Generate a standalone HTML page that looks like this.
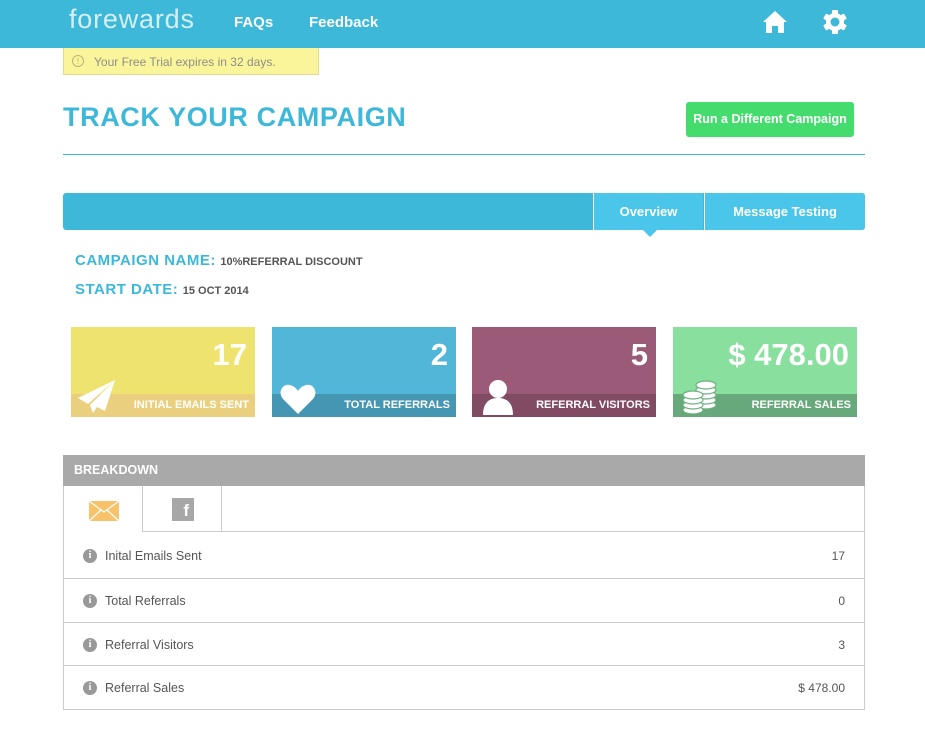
<!DOCTYPE html>
<html><head><meta charset="utf-8"><style>
*{box-sizing:border-box;margin:0;padding:0}
body{width:925px;height:736px;background:#fff;font-family:"Liberation Sans",sans-serif;position:relative;overflow:hidden}
.abs{position:absolute}
.hdr{left:0;top:0;width:925px;height:48px;background:#3db8d9}
.logo{left:69px;top:4px;color:#d4eff7;font-size:27px;letter-spacing:0.8px;font-weight:normal}
.nav{top:14px;color:#fff;font-weight:bold;font-size:15px}
.trial{left:63px;top:48px;width:256px;height:27px;background:#faf59a;border:1px solid #e2d98c;border-top:none;color:#8f8f86;font-size:12px;padding:7px 0 0 30px}
.trial .i{position:absolute;left:8px;top:7px;width:12px;height:12px;border:1px solid #b9b37a;border-radius:50%;font-size:8px;text-align:center;line-height:11px;color:#b0aa70;padding:0}
h1{position:absolute;left:63px;top:102px;color:#3db8d9;font-size:27px;font-weight:bold;letter-spacing:0.6px}
.btn{left:686px;top:102px;width:168px;height:35px;background:#45dc6e;border-radius:3px;color:#fff;font-size:12.5px;font-weight:bold;text-align:center;line-height:35px}
.rule{left:63px;top:154px;width:802px;height:1px;background:#3db8d9}
.tabbar{left:63px;top:193px;width:802px;height:37px;background:#3db8d9;border-radius:3px}
.tab{top:193px;height:37px;background:#49c6ea;color:#fff;font-size:13px;font-weight:bold;text-align:center;line-height:37px}
.lbl{color:#3db8d9;font-weight:bold;font-size:15px;letter-spacing:0.5px}
.val{color:#555;font-weight:bold;font-size:11px}
.card{top:327px;width:184px;height:90px;overflow:hidden}
.card .n{position:absolute;right:8px;top:10px;color:#fff;font-weight:bold;font-size:31px}
.card .b{position:absolute;left:0;bottom:0;width:100%;height:23px;text-align:right;padding-right:6px;color:#fff;font-weight:bold;font-size:11px;line-height:23px}
.card svg{position:absolute}
.bd{left:63px;top:455px;width:802px;height:255px;border:1px solid #c8ccd0}
.bdh{position:absolute;left:-1px;top:-1px;width:802px;height:31px;background:#a9a9a9;color:#fff;font-weight:bold;font-size:12.5px;padding:8px 11px}
.row{position:absolute;left:0;width:800px;height:44px;border-top:1px solid #c8ccd0;color:#555;font-size:12.5px;line-height:44px;padding-left:41px}
.row .r{position:absolute;right:19px;top:0;font-size:12px}
.row .ic{position:absolute;left:19px;top:15px;width:14px;height:14px;border-radius:50%;background:#999;color:#fff;font-size:10px;font-weight:bold;line-height:14px;text-align:center;font-family:"Liberation Serif",serif}
</style></head><body>
<div class="abs hdr"></div>
<div class="abs logo">forewards</div>
<div class="abs nav" style="left:234px">FAQs</div>
<div class="abs nav" style="left:309px">Feedback</div>
<svg class="abs" style="left:762px;top:10px" width="26" height="24" viewBox="0 0 26 24"><path d="M13 1 L25 12 L22 12 L22 23 L16 23 L16 16 L10 16 L10 23 L4 23 L4 12 L1 12 Z" fill="#fff"/></svg>
<svg class="abs" style="left:822px;top:9px" width="26" height="26" viewBox="0 0 26 26"><g fill="#fff"><circle cx="13" cy="13" r="9"/><rect x="10" y="1" width="6" height="24" rx="1"/><rect x="10" y="1" width="6" height="24" rx="1" transform="rotate(60 13 13)"/><rect x="10" y="1" width="6" height="24" rx="1" transform="rotate(120 13 13)"/></g><circle cx="13" cy="13" r="4.5" fill="#3db8d9"/></svg>
<div class="abs trial"><span class="i">!</span>Your Free Trial expires in 32 days.</div>
<h1>TRACK YOUR CAMPAIGN</h1>
<div class="abs btn">Run a Different Campaign</div>
<div class="abs rule"></div>
<div class="abs tabbar"></div>
<div class="abs tab" style="left:593px;width:110px;border-left:1px solid #fff">Overview</div>
<div class="abs tab" style="left:704px;width:161px;border-left:1px solid #fff;border-radius:0 3px 3px 0">Message Testing</div>
<div class="abs" style="left:643px;top:230px;width:0;height:0;border-left:7px solid transparent;border-right:7px solid transparent;border-top:7px solid #49c6ea"></div>
<div class="abs" style="left:75px;top:252px"><span class="lbl">CAMPAIGN NAME:</span> <span class="val">10%REFERRAL DISCOUNT</span></div>
<div class="abs" style="left:75px;top:281px"><span class="lbl">START DATE:</span> <span class="val">15 OCT 2014</span></div>

<div class="abs card" style="left:71px;background:#efe36f"><div class="n">17</div><div class="b" style="background:#ead07e">INITIAL EMAILS SENT</div>
<svg style="left:6px;top:52px" width="40" height="36" viewBox="0 0 40 36"><path d="M38 1 L1 19 L11 25 Z M38 1 L13 26 L16 34 Z M38 1 L18 27 L28 32 Z" fill="#fff"/></svg></div>
<div class="abs card" style="left:272px;background:#52b6d9"><div class="n">2</div><div class="b" style="background:#4496b3">TOTAL REFERRALS</div>
<svg style="left:8px;top:56px" width="36" height="32" viewBox="0 0 36 32"><path d="M18 31 L3 16 C-3 9 3 0 10 2 C14 3 17 6 18 8 C19 6 22 3 26 2 C33 0 39 9 33 16 Z" fill="#fff"/></svg></div>
<div class="abs card" style="left:472px;background:#9b5b78"><div class="n">5</div><div class="b" style="background:#814b64">REFERRAL VISITORS</div>
<svg style="left:10px;top:52px" width="32" height="36" viewBox="0 0 32 36"><circle cx="16" cy="10" r="9" fill="#fff"/><path d="M1 36 C1 24 7 19 16 19 C25 19 31 24 31 36 Z" fill="#fff"/></svg></div>
<div class="abs card" style="left:673px;background:#89df9e"><div class="n">$ 478.00</div><div class="b" style="background:#67a97a">REFERRAL SALES</div>
<svg style="left:9px;top:52px" width="36" height="36" viewBox="0 0 36 36"><g fill="#fff" stroke="#6bb07f" stroke-width="1.2">
<ellipse cx="24" cy="26" rx="10" ry="4"/><ellipse cx="24" cy="21" rx="10" ry="4"/><ellipse cx="24" cy="16" rx="10" ry="4"/><ellipse cx="24" cy="11" rx="10" ry="4"/><ellipse cx="24" cy="6" rx="10" ry="4"/>
<ellipse cx="11" cy="31" rx="10" ry="4"/><ellipse cx="11" cy="26" rx="10" ry="4"/><ellipse cx="11" cy="21" rx="10" ry="4"/><ellipse cx="11" cy="16" rx="10" ry="4"/></g></svg></div>

<div class="abs bd">
<div class="bdh">BREAKDOWN</div>
<div style="position:absolute;left:0;top:30px;width:79px;height:46px;border-right:1px solid #c8ccd0"></div>
<div style="position:absolute;left:79px;top:30px;width:79px;height:46px;border-right:1px solid #c8ccd0;border-bottom:1px solid #c8ccd0"></div>
<div style="position:absolute;left:158px;top:30px;width:642px;height:46px;border-bottom:1px solid #c8ccd0"></div>
<svg style="position:absolute;left:25px;top:45px" width="30" height="20" viewBox="0 0 30 20"><rect width="30" height="20" fill="#f7c26a"/><path d="M0 0 L15 11 L30 0 M0 20 L12 9 M30 20 L18 9" stroke="#fff" stroke-width="1.2" fill="none"/></svg>
<div style="position:absolute;left:108px;top:42px;width:22px;height:23px;background:#a7a7a7;color:#fff;font-weight:bold;font-size:17px;text-align:right;padding-right:5px;line-height:26px">f</div>
<div class="row" style="top:78px;border-top:none"><span class="ic">i</span>Inital Emails Sent<span class="r">17</span></div>
<div class="row" style="top:122px"><span class="ic">i</span>Total Referrals<span class="r">0</span></div>
<div class="row" style="top:166px"><span class="ic">i</span>Referral Visitors<span class="r">3</span></div>
<div class="row" style="top:209px"><span class="ic">i</span>Referral Sales<span class="r">$ 478.00</span></div>
</div>
</body></html>
